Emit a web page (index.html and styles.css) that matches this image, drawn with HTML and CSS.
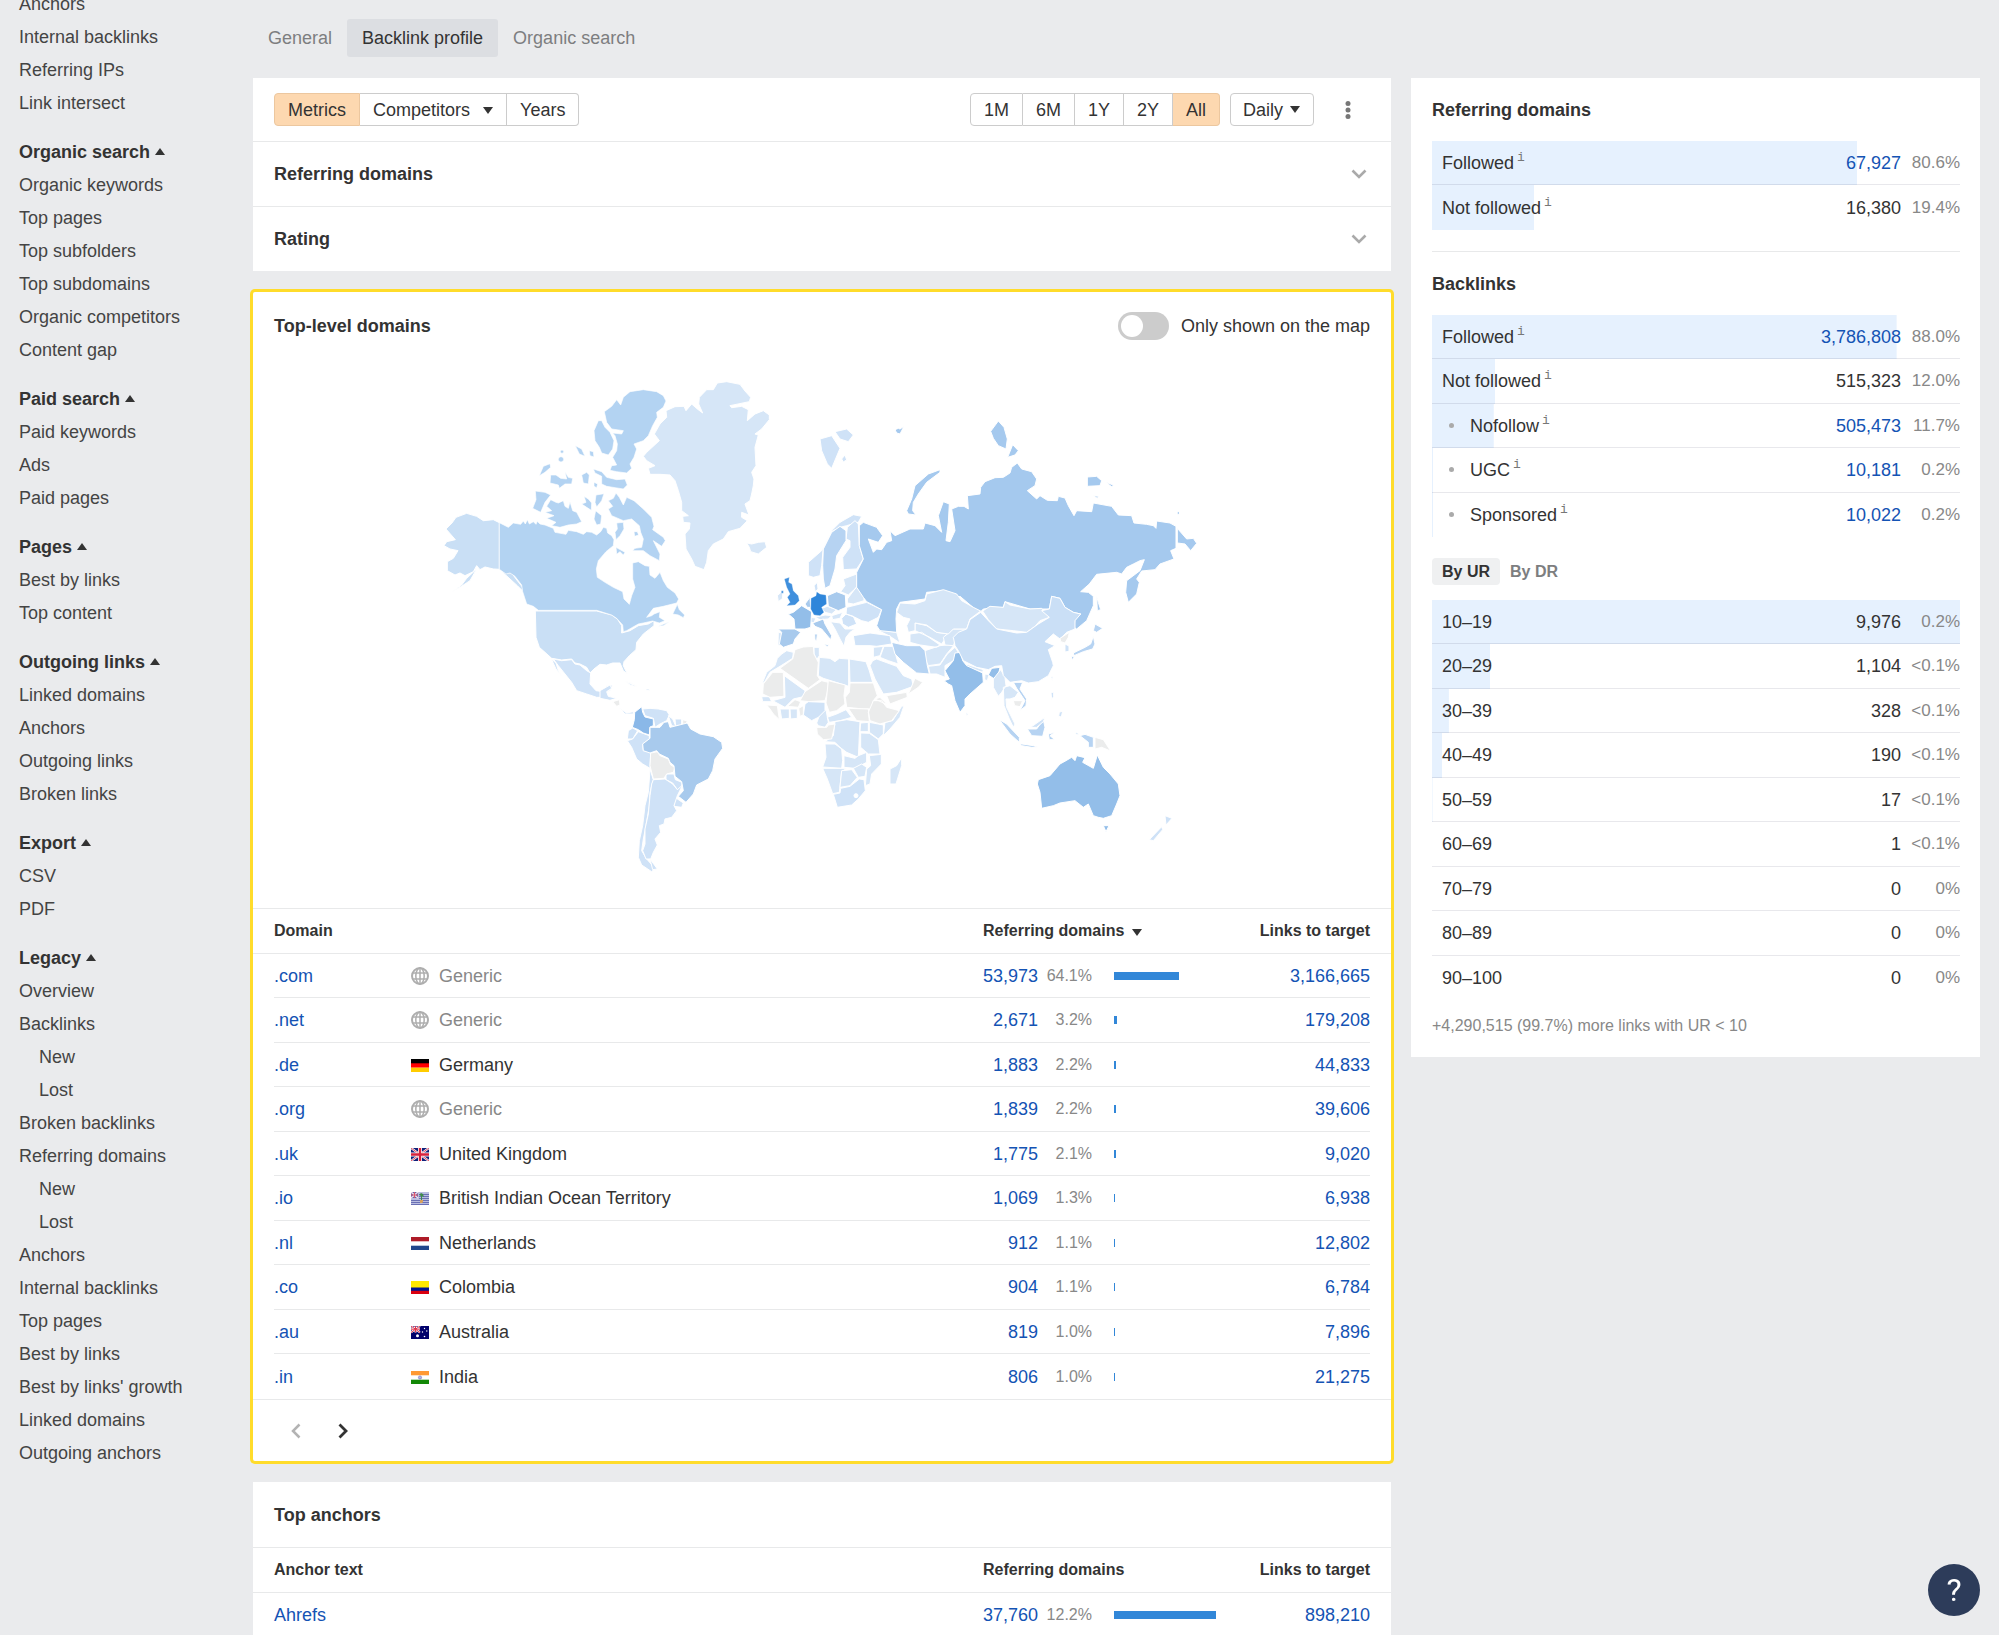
FILE: index.html
```html
<!DOCTYPE html>
<html lang="en">
<head>
  <meta charset="UTF-8" />
  <meta name="viewport" content="width=device-width, initial-scale=1.0"/>
  <title>Backlink profile</title>
  <link rel="stylesheet" href="styles.css">
</head>
<body>
  <!-- shared icons and flags -->
  <svg class="sprite" aria-hidden="true">
    <symbol id="globe" viewBox="0 0 18 18">
      <g fill="none" stroke="#aeaeae" stroke-width="1.500">
        <circle cx="9" cy="9" r="8" stroke-width="2"/>
        <ellipse cx="9" cy="9" rx="4.200" ry="8"/>
        <path d="M9 1v16M1.500 6h15M1.500 12h15"/>
      </g>
    </symbol>
    <symbol id="jack" viewBox="0 0 18 13">
      <path fill="#10207a" d="M0 0h18v13H0z"/>
      <path stroke="#fff" stroke-width="2.200" d="M0 0l18 13M18 0L0 13"/>
      <path stroke="#d8213b" stroke-width=".8" d="M0 0l18 13M18 0L0 13"/>
      <path stroke="#fff" stroke-width="4" d="M9 0v13M0 6.500h18"/>
      <path stroke="#d8213b" stroke-width="2.400" d="M9 0v13M0 6.500h18"/>
    </symbol>
    <symbol id="de" viewBox="0 0 18 13"><path d="M0 0h18v5H0z"/><path fill="#f00" d="M0 4.300h18v4.400H0z"/><path fill="#fc0" d="M0 8.700h18V13H0z"/></symbol>
    <symbol id="nl" viewBox="0 0 18 13"><path fill="#fff" d="M0 0h18v13H0z"/><path fill="#ae1c28" d="M0 0h18v4.300H0z"/><path fill="#21468b" d="M0 8.700h18V13H0z"/></symbol>
    <symbol id="co" viewBox="0 0 18 13"><path fill="#ffe800" d="M0 0h18v7H0z"/><path fill="#00148e" d="M0 6.500h18v4H0z"/><path fill="#da0010" d="M0 9.800h18V13H0z"/></symbol>
    <symbol id="in" viewBox="0 0 18 13"><path fill="#fff" d="M0 0h18v13H0z"/><path fill="#f93" d="M0 0h18v4.300H0z"/><path fill="#128807" d="M0 8.700h18V13H0z"/><circle cx="9" cy="6.500" r="1.600" fill="#b5b5e0" stroke="#6c6cc0" stroke-width=".6"/></symbol>
    <symbol id="au" viewBox="0 0 18 13">
      <path fill="#00006b" d="M0 0h18v13H0z"/>
      <path stroke="#fff" stroke-width="2" d="M0 0l9 6.500M9 0L0 6.500M4.500 0v6.500M0 3.200h9"/>
      <path stroke="#e0344a" d="M0 0l9 6.500M9 0L0 6.500M4.500 0v6.500M0 3.200h9"/>
      <g fill="#fff"><circle cx="6.500" cy="9.800" r="1.500"/><circle cx="13.500" cy="2.500" r=".7"/><circle cx="11.500" cy="6" r=".7"/><circle cx="15.800" cy="5" r=".7"/><circle cx="13.500" cy="10.500" r=".8"/></g>
    </symbol>
    <symbol id="io" viewBox="0 0 18 13">
      <path fill="#b9bde0" d="M0 0h18v13H0z"/>
      <path stroke="#6a70b4" d="M0 8.500h18M0 10.500h18M0 12.500h18M8 2.500h10M8 4.500h10M8 6.500h10"/>
      <path fill="#5c62ae" d="M0 0h7v6H0z"/>
      <path stroke="#f3dfe8" stroke-width="1.500" d="M0 0l7 6M7 0L0 6"/>
      <path stroke="#d9566c" d="M3.500 0v6M0 3h7"/>
      <path fill="#3f8a4c" d="M8 3l2-2 2 1 1 3-2-1v4h-1V4z"/>
      <path fill="#d9a15c" d="M9 8h3v2l-1 1H9z"/>
    </symbol>
    <symbol id="chevron" viewBox="0 0 16 10"><path d="M1.500 1.500L8 8l6.500-6.500" fill="none" stroke="#aaa" stroke-width="2.600"/></symbol>
  </svg>

  <div class="page">
    <nav class="sidebar">
      <ul>
        <li><a href="#">Anchors</a></li>
        <li><a href="#">Internal backlinks</a></li>
        <li><a href="#">Referring IPs</a></li>
        <li><a href="#">Link intersect</a></li>
      </ul>
      <h3>Organic search</h3>
      <ul>
        <li><a href="#">Organic keywords</a></li>
        <li><a href="#">Top pages</a></li>
        <li><a href="#">Top subfolders</a></li>
        <li><a href="#">Top subdomains</a></li>
        <li><a href="#">Organic competitors</a></li>
        <li><a href="#">Content gap</a></li>
      </ul>
      <h3>Paid search</h3>
      <ul>
        <li><a href="#">Paid keywords</a></li>
        <li><a href="#">Ads</a></li>
        <li><a href="#">Paid pages</a></li>
      </ul>
      <h3>Pages</h3>
      <ul>
        <li><a href="#">Best by links</a></li>
        <li><a href="#">Top content</a></li>
      </ul>
      <h3>Outgoing links</h3>
      <ul>
        <li><a href="#">Linked domains</a></li>
        <li><a href="#">Anchors</a></li>
        <li><a href="#">Outgoing links</a></li>
        <li><a href="#">Broken links</a></li>
      </ul>
      <h3>Export</h3>
      <ul>
        <li><a href="#">CSV</a></li>
        <li><a href="#">PDF</a></li>
      </ul>
      <h3>Legacy</h3>
      <ul>
        <li><a href="#">Overview</a></li>
        <li><a href="#">Backlinks</a></li>
        <li class="nested"><a href="#">New</a></li>
        <li class="nested"><a href="#">Lost</a></li>
        <li><a href="#">Broken backlinks</a></li>
        <li><a href="#">Referring domains</a></li>
        <li class="nested"><a href="#">New</a></li>
        <li class="nested"><a href="#">Lost</a></li>
        <li><a href="#">Anchors</a></li>
        <li><a href="#">Internal backlinks</a></li>
        <li><a href="#">Top pages</a></li>
        <li><a href="#">Best by links</a></li>
        <li><a href="#">Best by links' growth</a></li>
        <li><a href="#">Linked domains</a></li>
        <li><a href="#">Outgoing anchors</a></li>
      </ul>
    </nav>

    <div class="content">
      <div class="tabs">
        <button class="tab">General</button>
        <button class="tab active">Backlink profile</button>
        <button class="tab">Organic search</button>
      </div>

      <div class="columns">
        <main>
          <section class="card">
            <div class="toolbar">
              <div class="btn-group">
                <button class="btn active">Metrics</button>
                <button class="btn" aria-haspopup="true">Competitors <span class="caret wide"></span></button>
                <button class="btn">Years</button>
              </div>
              <div class="toolbar-right">
                <div class="btn-group range">
                  <button class="btn">1M</button>
                  <button class="btn">6M</button>
                  <button class="btn">1Y</button>
                  <button class="btn">2Y</button>
                  <button class="btn active">All</button>
                </div>
                <div class="select">
                  <select aria-label="Interval"><option>Daily</option></select>
                  <span class="caret"></span>
                </div>
                <button class="more" aria-label="More">
                  <svg width="6" height="18" viewBox="0 0 6 18" fill="#777"><circle cx="3" cy="2.500" r="2.500"/><circle cx="3" cy="9" r="2.500"/><circle cx="3" cy="15.500" r="2.500"/></svg>
                </button>
              </div>
            </div>
            <button class="fold">Referring domains <svg width="16" height="10"><use href="#chevron"/></svg></button>
            <button class="fold">Rating <svg width="16" height="10"><use href="#chevron"/></svg></button>
          </section>

          <section class="card highlighted">
            <div class="card-head">
              <h2>Top-level domains</h2>
              <label class="switch"><input type="checkbox"> Only shown on the map</label>
            </div>

            <svg class="map" viewBox="0 0 1138 549" role="img" aria-label="World map">
              <!-- North America, Greenland -->
              <g transform="translate(177 10) scale(.33333)">
                <g class="c-us">
                  <path d="M48 480L66 462 78 445 110 433 140 442 160 455 190 452 208 461V601L190 600 165 594 150 602 140 590 130 608 105 620 90 612 75 618 52 605V578L70 568 84 545 60 540 42 530 50 518 76 512Z"/>
                  <path d="M208 601L222 610 245 612 262 635 278 655 280 668 262 650 240 630Z"/>
                  <path d="M140 600L120 635 90 655 66 668 95 648 110 628Z"/>
                  <path d="M316 726H500L545 738 562 750 575 770V792L600 785 625 770 655 765 672 755V770L640 795 620 820 618 842 598 860 582 878 580 890 592 915 580 905 570 882 548 882 530 888 510 886 492 900 480 912 470 895 450 885 435 882 425 870 395 873 365 868 345 850 328 835 318 805Z"/>
                </g>
                <g class="c-canada">
                  <path d="M208 461L235 475 250 462 272 466 280 456 286 465 292 452 298 465 310 458 318 466 322 457 330 465 345 468 370 478 375 490 408 496 415 484 440 488 460 496 470 488 485 490 500 498 512 488 520 475 530 478 533 492 545 500 552 512 550 530 528 548 505 575 499 600 502 625 525 640 550 655 578 668 582 690 598 706 605 680 615 655 608 630V582L625 578 645 590 658 592 660 618 675 628 690 610 700 635 712 655 735 672 746 690 740 702 700 712 670 718 650 745 665 740 672 735 690 728 688 745 705 755 688 762 668 756 640 762 625 765 590 785 580 788 578 768 560 748 545 738 500 724H325L310 712 290 705 278 668 275 648 255 622 240 612 228 615 208 601Z"/>
                  <path d="M728 735L742 706 748 722 764 738 760 746 745 738ZM685 772L718 758 700 770Z"/>
                  <path d="M523 128L545 112 560 92 572 108 580 85 600 68 640 62 680 68 700 80 708 96 700 115 680 130 682 145 668 170 655 200 640 215 612 225 620 240 612 265 600 285 605 298 590 312 560 308 540 304 545 290 560 288 548 265 560 245 562 225 555 200 548 192 575 195 580 185 545 180 530 160Z"/>
                  <path d="M505 155H515L525 175 540 190 552 215 548 240 535 258 515 252 508 235 495 215 492 185Z"/>
                  <path d="M490 300L515 308 530 325 560 332 585 330 592 348 580 360 555 356 530 352 515 345V322L495 312Z"/>
                  <path d="M328 320L340 292 360 284 362 295 345 310ZM362 318L378 318 392 328 410 330 405 308 415 325 428 328 425 345 405 345 388 358 385 348 360 342ZM436 230L455 240 465 262 448 255ZM478 245L490 248 492 264 480 260ZM455 318L470 310 478 318 475 345 460 342ZM492 340L503 345 500 356 492 352Z"/>
                  <circle cx="393" cy="271" r="8"/><circle cx="396" cy="248" r="5"/>
                  <path d="M316 366L345 370 362 378 345 400 332 430 308 418 318 392Z"/>
                  <path d="M362 392L378 400 385 402 400 395 405 412 415 418 420 398 428 425 440 430 455 458 440 465 415 468 390 475 365 470 378 460 350 448 372 440 345 430 365 425 350 412Z"/>
                  <path d="M462 382L475 390 485 402 484 424 470 415 455 405 468 400ZM498 378L522 374 515 395 500 414 495 400ZM497 425L515 440 512 465 500 468 492 450Z"/>
                  <path d="M535 395L550 388 558 372 568 385 580 408 590 385 612 395 640 420 665 445 672 472 668 482 700 505 706 515 695 532 670 515 690 555 688 575 660 560 640 545 608 545 615 538 635 535 640 510 632 490 628 470 605 450 580 455 545 440 535 420 548 412Z"/>
                  <path d="M560 462L580 460 582 480 570 500 558 512 555 490 562 480ZM558 535L585 550 580 558 570 548 560 556ZM612 488h10l4 10-12 4Z"/>
                </g>
                <g class="c-pale">
                  <path d="M640 262L650 250 688 215 673 195 690 165 710 145 708 125 735 113 762 112 768 125 785 105 802 120 818 132 806 105 808 85 830 62 850 62 862 42 890 38 930 46 945 66 962 85 958 98 900 110 905 116 935 112 955 122 952 155 975 135 1000 125 1018 138V152L995 180 975 195 985 198 975 235 978 290 965 310 972 330 970 350 965 375 960 395 945 405 957 438 935 430V445L952 455 930 478 895 488 880 510 850 525 835 545 830 580 822 602 795 592 785 570 768 540 765 495 778 480 780 462 760 460 758 442 775 440 755 425V400L745 365 735 335 720 318 690 316 660 316 655 298 675 290 650 275Z"/>
                  <path d="M950 522L965 525 985 520 1005 518 1010 535 985 555 962 548 958 535Z"/>
                </g>
                <g class="c-light">
                  <path d="M370 870L395 875 425 872 435 885 450 888 470 905 482 912 480 945 498 965 520 968 530 950 548 948 540 965 525 970 518 985 500 985 470 975 440 965 425 940 405 915 385 890Z"/>
                  <path d="M364 870L378 882 385 905 395 922 378 900ZM587 937L605 942 622 954 600 948ZM648 960l12 2-4 3Z"/>
                </g>
              </g>

              <!-- Central and South America -->
              <g transform="translate(347 300) scale(.33333)">
                <g class="c-light">
                  <path d="M0 95L30 78 35 88 20 98 25 112 50 118 30 124 0 118ZM58 148L80 162 100 158V165L75 165ZM78 67L110 80 95 76ZM138 90h10v4h-10Z"/>
                  <path d="M128 150L150 148 175 150 200 155 208 168 200 185 180 195 165 205 160 178 135 170Z"/>
                  <path d="M205 170L218 180 228 203 215 200ZM225 180h20v20h-18Z"/>
                  <path d="M85 215L98 207 113 215 98 240 82 240Z"/>
                  <path d="M82 245L98 240 115 218 148 230V240L128 255 130 275 152 280 150 328 128 315 110 300 95 265Z"/>
                  <path d="M198 345H222L226 362 246 370 245 388 232 392 218 372 198 362Z"/>
                  <path d="M225 415L250 432 245 445 222 442Z"/>
                  <path d="M150 330L160 362 150 400 148 440 138 500 130 540 125 575 140 600 165 628 155 638 125 618 115 595 118 545 128 500 135 440 145 400 148 360Z"/>
                  <path d="M160 362L195 360 218 375 232 392 248 378 232 410 222 440 230 455 215 475 195 480 192 495 178 500 182 520 165 540 172 558 160 580 152 600 138 600 128 575 135 555V510L145 465 150 410 155 375Z"/>
                  <path d="M150 600L172 630 158 632Z"/>
                </g>
                <g class="c-none">
                  <path d="M38 128L58 122 60 138 50 142ZM248 182l14 4-6 12-8-2Z"/>
                  <path d="M152 282L172 278 180 290 205 300 212 318 225 325 220 340 200 345 192 358 160 360 150 320Z"/>
                </g>
                <path class="c-colombia" d="M125 143L104 160 103 182 97 205 115 212 130 222 148 228 150 204 160 200V180L135 174 128 160Z"/>
                <path class="c-brazil" d="M150 205L180 205 192 190 205 188 210 205 262 192 272 210 300 225 340 233 365 250 368 268 345 300 338 335 325 360 290 378 280 405 258 430 235 412 250 395 245 368 225 352 222 320 210 310 205 298 178 285 170 275 150 282 130 275 128 255 150 238Z"/>
              </g>

              <!-- Europe, Africa, Middle East, India -->
              <g transform="translate(487 40) scale(.33333)">
                <g class="c-pale">
                  <path d="M125 765L140 755 160 760 158 778 120 802 90 820 72 852 68 850 80 820 105 800 112 778Z"/>
                  <path d="M222 745H238V770L230 782 222 765ZM238 775L270 778 285 788 298 778 326 780V862L250 838 235 830Z"/>
                  <path d="M328 780L378 788 388 815 398 850 330 850Z"/>
                  <path d="M133 830L195 875V892L160 900 135 925 98 905 135 895ZM65 893L88 893 95 908 68 908Z"/>
                  <path d="M430 1010L435 970 458 965 485 922 492 920 480 955 450 990Z"/>
                  <path d="M120 930H148V958L125 960ZM150 930h22v28l-20 2Z"/>
                  <path d="M230 972L240 945 258 932 265 970 255 985 235 980ZM262 955L290 945 318 932 335 955 300 965 268 970Z"/>
                  <path d="M285 968L320 962 360 968 358 1010 355 1075 320 1060 300 1045 285 1030 255 1028 280 1010Z"/>
                  <path d="M362 972L385 970V998H360ZM388 970L430 978V1005L415 1020 388 1000ZM362 1002L388 1003 415 1022 420 1065 385 1065 362 1045Z"/>
                  <path d="M255 1035L285 1035 305 1050 308 1085 305 1108 248 1104 258 1075ZM312 1070L345 1078 355 1070 380 1060V1090L345 1108 312 1105Z"/>
                  <path d="M388 1070L424 1066V1095L395 1125 390 1155 376 1160 380 1110 392 1100ZM248 1108L320 1108 305 1118 298 1180 278 1184 262 1140Z"/>
                  <path d="M305 1115L335 1112 352 1135 330 1160 300 1165ZM340 1108L365 1095 380 1105 375 1132 355 1135Z"/>
                  <path d="M450 1110L470 1100 485 1076V1100L468 1155 450 1155Z"/>
                  <path d="M112 590L128 575V598L115 608ZM115 700L125 702V740L114 738Z"/>
                  <path d="M245 628L262 622 290 632 275 645 255 640ZM225 655L255 648 275 650 265 660 240 662ZM210 655l18 2-6 14-14-2Z"/>
                  <path d="M275 650L308 640 300 658 278 662ZM322 600L350 563 372 590V605L340 615 322 612ZM310 540L350 525V565L325 588 302 578 315 560Z"/>
                  <path d="M272 668L300 672 315 690 345 690 330 700 318 715 312 742 300 720 285 690ZM410 692L470 700 480 732 450 712Z"/>
                  <path d="M400 745L430 742 420 770 400 775ZM432 742L460 742 475 795 445 785 420 775ZM398 785L410 780 470 802 490 830 515 840 520 862 470 880 430 885 405 840 390 800Z"/>
                  <path d="M510 705L545 700 600 738 590 745 540 738 510 730ZM525 672L560 680 590 700 625 705 605 735 570 715 525 695ZM555 755L600 740 645 735 620 765 600 795 565 800 555 780Z"/>
                  <path d="M570 825L565 802 600 798 622 765 645 745 655 760 640 785 615 800V835L590 825ZM610 715L640 690 680 690 650 715 640 740 615 738Z"/>
                  <path d="M678 795L730 812 728 820 680 805ZM735 825l12 2-5 18-8-3ZM678 938l6 8-5 6Z"/>
                </g>
                <g class="c-none">
                  <path d="M165 752L190 744 220 742 222 765 235 790 232 830 240 842 205 868 120 808 158 780Z"/>
                  <path d="M70 855L98 820 130 820 132 892 90 895 68 885ZM195 878L245 845 265 850 262 880 255 905 205 908 180 905Z"/>
                  <path d="M265 845L316 858 312 890 315 915 290 935 268 940 258 912ZM330 852L400 852 412 890 400 905 395 930 370 930 320 925 316 895 328 880Z"/>
                  <path d="M325 928L385 930 388 968 350 965ZM400 905L425 905 440 925 478 935 455 965 420 975 390 965 385 940ZM405 900L420 895 440 915 430 912Z"/>
                  <path d="M142 922L165 902 182 908 175 925ZM176 928l14-8v28l-10 4ZM80 918L112 920 118 962 100 945 90 930Z"/>
                  <path d="M230 985H260L265 978 285 975 275 1020 250 1022 232 1005ZM440 890L500 880 502 895 450 915ZM505 885L525 838 548 850 535 865Z"/>
                </g>
                <g class="c-light">
                  <path d="M195 915L205 908 255 910V935L235 955 215 965 190 948Z"/>
                  <path d="M280 1186L300 1182 302 1168 330 1162 358 1140 372 1142 376 1175 355 1200 335 1218 292 1225Z"/>
                  <path d="M205 530V490L245 455 270 400 300 370 340 347 365 352 355 370 320 380 300 385 270 400 250 445 245 500 240 530 220 535Z"/>
                  <path d="M322 385L345 365 355 375 358 440 370 480 350 510 310 512 308 475 330 445V425L318 420Z"/>
                  <path d="M305 658L318 645 340 652 350 675 325 685 308 675ZM320 625L380 610 425 632 415 655 385 670 365 665 345 655 318 645Z"/>
                  <path d="M340 710L390 702 450 710 455 735 410 742 390 740 345 740ZM222 560l10-10 2 20-8 8Z"/>
                  <path d="M240 120L275 110 300 148 275 208 262 195 245 155ZM285 98L320 90 340 108 325 128 300 120ZM305 180l10-12 5 15-10 6Z"/>
                </g>
                <circle class="lake" cx="348" cy="1190" r="6"/>
                <path class="c-iran" d="M248 500L250 450 275 400 300 382 318 395V425L290 470 285 510 270 560 255 568 250 540Z"/>
                <path class="c-iran" d="M455 730L500 740 540 740 555 755 562 800 568 825 530 822 490 790 465 765Z"/>
                <path class="c-brazil" d="M115 690L165 690 182 700 165 720 160 735 130 745 118 735 125 700ZM262 590L290 578 316 588 318 625 295 635 265 622ZM195 615l15-20 2 30-10 0ZM218 672L250 660 255 675 275 710 272 722 245 690 225 682ZM252 735l14 2-4 6ZM224 705h8l-2 20-5-2Z"/>
                <path class="c-australia" d="M145 645L160 640 185 620 215 638 212 685 195 690 165 690 162 660Z"/>
                <path class="c-uk" d="M133 540L148 535 146 550 156 555 160 575 175 590 178 605 165 618 140 620 150 610 142 595 150 585 140 565ZM124 575h6v8h-6Z"/>
                <path class="c-germany" d="M213 598L228 590 230 578 240 585 258 588 260 615 245 625 252 640 240 650 222 648 212 630Z"/>
                <path class="c-australia" d="M612 845L628 840 620 825 615 815 640 785 645 762 662 760 668 785 680 800 728 822 730 850 690 885 675 900V920L660 940 645 905 635 860 625 855ZM745 828L755 808 780 805 775 830 760 838Z"/>
                <path class="c-russia" d="M465 92L475 88 480 90 492 82 480 105 470 102ZM500 335L515 300 525 260 565 225 600 212V220L560 250 535 285 520 310 518 335 528 348 505 345Z"/>
              </g>

              <!-- Russia, East Asia, Oceania -->
              <g transform="translate(707 40) scale(.33333)">
                <g class="c-russia">
                  <path d="M-302 380L-290 370-250 385-232 410-245 430-275 420-260 460-250 450-235 452-220 430-205 425-210 395-195 410-150 390-110 390-105 372-75 380-55 400-65 350-50 308-32 315-35 370-42 425-30 428-15 395-25 330-5 322 12 322 25 330 22 290 60 285 62 265 75 248 105 236 130 235 150 222 155 205 172 192 185 210 215 218 230 240 225 260 202 275 230 300 240 290 262 304 292 305 295 292 315 297 325 320 342 350 350 335 395 338 400 312 455 322 475 348 515 350 522 372 560 376 580 380 588 388 590 366 630 372 648 382V448L632 455 642 480 600 495 585 512 545 516 530 540 538 550 530 585 505 610 497 580 500 545 540 515 553 482 540 485 520 495 500 505 485 525 470 520 410 526 388 555 362 578 385 580 400 592V620L380 665 350 690 342 685 345 660 362 645 340 640 315 625 300 598 275 592 268 630 210 630 135 608 130 625 70 630 62 638 45 630 0 592-15 600-50 575-100 580-105 600-180 610-190 630-192 660-190 700-240 695-250 680-235 632-280 608-290 595-310 565V520L-290 480-302 440Z"/>
                  <path d="M92 97L115 66 132 85 142 120 138 150 115 140 100 118ZM158 137L175 155 165 168 143 175ZM382 234L410 232 425 245 420 260 382 262ZM438 250l22 8-4 6ZM400 290l16 2-4 6ZM652 388L680 420 700 418 710 433 692 455 675 435 652 432ZM410 592L415 610 422 632 412 635Z"/>
                  <circle cx="655" cy="342" r="4"/>
                </g>
                <g class="c-pale">
                  <path d="M-190 640L-180 612-135 615-105 605-100 585-50 572-10 585 5 605 40 625 62 636 30 660 20 690-20 690-35 705-70 700-100 678-135 672V695L-155 700-160 680-150 660-170 655Z"/>
                  <path d="M68 636L90 622 130 625 135 608 150 618 210 630 245 628 268 655 240 665 225 682 200 700 160 695 110 690 85 662Z"/>
                  <path d="M100 840L122 812 135 835 138 860 125 880 115 892 100 865ZM130 865L150 860 175 880 165 895 150 900 138 900 140 925 150 945 165 975 160 985 148 960 132 920Z"/>
                </g>
                <path class="c-china" d="M62 640L85 665 110 690 170 702 200 700 235 675 268 655 245 635 268 630 275 592 300 598 315 625 340 640 362 645 345 665V690L320 700 300 720 280 705 255 728 285 740 265 752 278 790 280 800 265 830 235 848 205 852 185 845 150 850 130 830 125 800 105 802 85 812 50 805 10 785-5 755-15 740-20 715-5 700 20 690 30 662Z"/>
                <g class="c-none">
                  <path d="M300 718L328 700 325 715 315 732 302 728ZM160 905h28l-8 18-16-3ZM405 1015L430 1022 452 1056 425 1045 405 1050Z"/>
                </g>
                <g class="c-iran">
                  <path d="M400 712L405 735 398 750 370 758 342 770 340 762 375 745 392 735ZM405 675L428 688 410 700 400 695ZM333 772h10l-5 12Z"/>
                  <path d="M160 850L188 850 180 870 200 900 198 920 180 935 195 905 170 868Z"/>
                  <path d="M118 962L140 975 178 1015V1030L150 1005ZM180 1034L220 1040 235 1045 215 1045 185 1040ZM202 990L230 990 250 962 255 985 248 1012 215 1010ZM265 1005L285 1000 270 1010 284 1022 268 1022ZM345 1000l12 4-6 4ZM360 1010L375 1006 400 1015V1045H385V1030Z"/>
                </g>
                <g class="c-light">
                  <path d="M315 735l12 6v16l-12 2ZM212 985L255 955 250 968 230 985ZM273 880h8v12l-6 10ZM298 940l10-4-4 18-8-2ZM273 835l6-4-2 14Z"/>
                  <path d="M615 1250L636 1258 618 1278ZM605 1283L608 1292 580 1325 568 1322Z"/>
                </g>
                <path class="c-australia" d="M235 1142L270 1130 300 1095 318 1085 335 1075 345 1085 350 1070 375 1076 368 1090 400 1108 412 1068 430 1105 450 1125 475 1155 480 1190 470 1215 455 1250 430 1258 415 1255 400 1250 385 1215 370 1225 345 1205 300 1212 280 1220 245 1228 240 1180 232 1155ZM430 1280H447L438 1298Z"/>
              </g>
            </svg>

            <table class="data bordered">
              <colgroup><col class="gut-l"><col class="w-domain"><col><col class="w-num"><col class="w-pct"><col class="w-bar"><col class="w-links"><col class="gut-r"></colgroup>
              <thead>
                <tr><th>Domain</th><th></th><th colspan="3">Referring domains <span class="caret"></span></th><th class="num">Links to target</th></tr>
              </thead>
              <tbody>
                <tr><td><a href="#">.com</a></td><td class="muted"><svg class="flag globe"><use href="#globe"/></svg>Generic</td><td class="num"><a href="#">53,973</a></td><td class="pct">64.1%</td><td class="bar"><div style="width:65px"></div></td><td class="num"><a href="#">3,166,665</a></td></tr>
                <tr><td><a href="#">.net</a></td><td class="muted"><svg class="flag globe"><use href="#globe"/></svg>Generic</td><td class="num"><a href="#">2,671</a></td><td class="pct">3.2%</td><td class="bar"><div style="width:3px"></div></td><td class="num"><a href="#">179,208</a></td></tr>
                <tr><td><a href="#">.de</a></td><td><svg class="flag"><use href="#de"/></svg>Germany</td><td class="num"><a href="#">1,883</a></td><td class="pct">2.2%</td><td class="bar"><div style="width:2px"></div></td><td class="num"><a href="#">44,833</a></td></tr>
                <tr><td><a href="#">.org</a></td><td class="muted"><svg class="flag globe"><use href="#globe"/></svg>Generic</td><td class="num"><a href="#">1,839</a></td><td class="pct">2.2%</td><td class="bar"><div style="width:2px"></div></td><td class="num"><a href="#">39,606</a></td></tr>
                <tr><td><a href="#">.uk</a></td><td><svg class="flag"><use href="#jack"/></svg>United Kingdom</td><td class="num"><a href="#">1,775</a></td><td class="pct">2.1%</td><td class="bar"><div style="width:2px"></div></td><td class="num"><a href="#">9,020</a></td></tr>
                <tr><td><a href="#">.io</a></td><td><svg class="flag"><use href="#io"/></svg>British Indian Ocean Territory</td><td class="num"><a href="#">1,069</a></td><td class="pct">1.3%</td><td class="bar"><div style="width:1px"></div></td><td class="num"><a href="#">6,938</a></td></tr>
                <tr><td><a href="#">.nl</a></td><td><svg class="flag"><use href="#nl"/></svg>Netherlands</td><td class="num"><a href="#">912</a></td><td class="pct">1.1%</td><td class="bar"><div style="width:1px"></div></td><td class="num"><a href="#">12,802</a></td></tr>
                <tr><td><a href="#">.co</a></td><td><svg class="flag"><use href="#co"/></svg>Colombia</td><td class="num"><a href="#">904</a></td><td class="pct">1.1%</td><td class="bar"><div style="width:1px"></div></td><td class="num"><a href="#">6,784</a></td></tr>
                <tr><td><a href="#">.au</a></td><td><svg class="flag"><use href="#au"/></svg>Australia</td><td class="num"><a href="#">819</a></td><td class="pct">1.0%</td><td class="bar"><div style="width:1px"></div></td><td class="num"><a href="#">7,896</a></td></tr>
                <tr><td><a href="#">.in</a></td><td><svg class="flag"><use href="#in"/></svg>India</td><td class="num"><a href="#">806</a></td><td class="pct">1.0%</td><td class="bar"><div style="width:1px"></div></td><td class="num"><a href="#">21,275</a></td></tr>
              </tbody>
            </table>

            <div class="pager">
              <button aria-label="Previous" disabled><svg width="10" height="16" viewBox="0 0 10 16"><path d="M8.500 1.500L2 8l6.500 6.500" fill="none" stroke="#b3b3b3" stroke-width="2.500"/></svg></button>
              <button aria-label="Next"><svg width="10" height="16" viewBox="0 0 10 16"><path d="M1.500 1.500L8 8l-6.500 6.500" fill="none" stroke="#333" stroke-width="2.800"/></svg></button>
            </div>
          </section>

          <section class="card">
            <div class="card-head small"><h2>Top anchors</h2></div>
            <table class="data bordered">
              <colgroup><col class="gut-l"><col><col class="w-num"><col class="w-pct"><col class="w-bar"><col class="w-links"><col class="gut-r"></colgroup>
              <thead>
                <tr><th>Anchor text</th><th colspan="3">Referring domains</th><th class="num">Links to target</th></tr>
              </thead>
              <tbody>
                <tr><td><a href="#">Ahrefs</a></td><td class="num"><a href="#">37,760</a></td><td class="pct">12.2%</td><td class="bar"><div style="width:102px"></div></td><td class="num"><a href="#">898,210</a></td></tr>
              </tbody>
            </table>
          </section>
        </main>

        <aside class="card">
          <h2>Referring domains</h2>
          <table class="stats">
            <tr style="--share:80.5%"><td>Followed<sup>i</sup></td><td class="num"><a href="#">67,927</a></td><td class="pct">80.6%</td></tr>
            <tr style="--share:19.4%"><td>Not followed<sup>i</sup></td><td class="num">16,380</td><td class="pct">19.4%</td></tr>
          </table>
          <h2 class="divided">Backlinks</h2>
          <table class="stats">
            <tr style="--share:88%"><td>Followed<sup>i</sup></td><td class="num"><a href="#">3,786,808</a></td><td class="pct">88.0%</td></tr>
            <tr style="--share:12%"><td>Not followed<sup>i</sup></td><td class="num">515,323</td><td class="pct">12.0%</td></tr>
            <tr class="sub" style="--share:11.7%"><td>Nofollow<sup>i</sup></td><td class="num"><a href="#">505,473</a></td><td class="pct">11.7%</td></tr>
            <tr class="sub" style="--share:0.2%"><td>UGC<sup>i</sup></td><td class="num"><a href="#">10,181</a></td><td class="pct">0.2%</td></tr>
            <tr class="sub" style="--share:0.2%"><td>Sponsored<sup>i</sup></td><td class="num"><a href="#">10,022</a></td><td class="pct">0.2%</td></tr>
          </table>
          <div class="pills">
            <button class="pill active">By UR</button>
            <button class="pill">By DR</button>
          </div>
          <table class="stats">
            <tr style="--share:100%"><td>10–19</td><td class="num">9,976</td><td class="pct">0.2%</td></tr>
            <tr style="--share:11%"><td>20–29</td><td class="num">1,104</td><td class="pct">&lt;0.1%</td></tr>
            <tr style="--share:3.2%"><td>30–39</td><td class="num">328</td><td class="pct">&lt;0.1%</td></tr>
            <tr style="--share:1.9%"><td>40–49</td><td class="num">190</td><td class="pct">&lt;0.1%</td></tr>
            <tr style="--share:0.1%"><td>50–59</td><td class="num">17</td><td class="pct">&lt;0.1%</td></tr>
            <tr style="--share:0%"><td>60–69</td><td class="num">1</td><td class="pct">&lt;0.1%</td></tr>
            <tr style="--share:0%"><td>70–79</td><td class="num">0</td><td class="pct">0%</td></tr>
            <tr style="--share:0%"><td>80–89</td><td class="num">0</td><td class="pct">0%</td></tr>
            <tr style="--share:0%"><td>90–100</td><td class="num">0</td><td class="pct">0%</td></tr>
          </table>
          <p class="note">+4,290,515 (99.7%) more links with UR &lt; 10</p>
        </aside>
      </div>
    </div>
  </div>

  <button class="help" aria-label="Help">?</button>
</body>
</html>
```

FILE: styles.css
```css
* {
  box-sizing: border-box;
}
body {
  margin: 0;
  height: 100vh;
  overflow: hidden;
  background-color: #eaebed;
  color: #333;
  font-family: "Liberation Sans", Arial, sans-serif;
  font-size: 18px;
  line-height: 24px;
}
a {
  color: #1453b4;
  text-decoration: none;
}
h2, h3, p {
  margin: 0;
}
h2 {
  font-size: 18px;
  line-height: 24px;
}
button, select {
  font: inherit;
  color: inherit;
  background: none;
  border: none;
  padding: 0;
  cursor: pointer;
}
.sprite {
  display: none;
}
.page {
  display: flex;
}

/* sidebar */
.sidebar {
  flex: 0 0 253px;
  margin-top: -12px;
  padding-left: 19px;
  line-height: 33px;
}
.sidebar ul {
  list-style: none;
  margin: 0 0 16px;
  padding: 0;
}
.sidebar a {
  color: #444;
}
.sidebar .nested {
  padding-left: 20px;
}
.sidebar h3 {
  font-size: 18px;
}
.sidebar h3::after {
  content: "";
  display: inline-block;
  margin-left: 5px;
  vertical-align: 3px;
  border: 5px solid transparent;
  border-top: none;
  border-bottom: 7px solid #333;
}

/* content */
.content {
  flex: 1;
  min-width: 0;
  padding: 19px 19px 0 0;
}
.tabs {
  display: flex;
  margin-bottom: 21px;
}
.tab {
  height: 38px;
  padding: 0 15px;
  border-radius: 3px;
  color: #7d7e80;
}
.tab.active {
  background-color: #dcdee2;
  color: #333;
}
.columns {
  display: grid;
  grid-template-columns: 2fr 1fr;
  gap: 20px;
  align-items: start;
}
main {
  display: flex;
  flex-direction: column;
  gap: 21px;
  min-width: 0;
}
.card {
  background-color: #fff;
}
.highlighted {
  border-radius: 2px;
  box-shadow: 0 0 0 3px #ffdc2b;
}

/* toolbar */
.toolbar {
  display: flex;
  justify-content: space-between;
  align-items: center;
  height: 63px;
  padding: 0 20px 0 21px;
}
.toolbar-right {
  display: flex;
  align-items: center;
  gap: 10px;
}
.btn-group {
  display: flex;
}
.btn {
  height: 33px;
  padding: 0 13px;
  border: 1px solid #ccc;
  border-left-width: 0;
}
.btn:first-child {
  border-left-width: 1px;
  border-radius: 4px 0 0 4px;
}
.btn:last-child {
  border-radius: 0 4px 4px 0;
}
.btn.active {
  background-color: #fdd8b0;
  border-color: #ecc79f;
}
.caret {
  display: inline-block;
  border: 5px solid transparent;
  border-bottom: none;
  border-top: 7px solid #333;
  vertical-align: 2px;
}
.caret.wide {
  margin-left: 8px;
}
.select {
  position: relative;
}
.select select {
  appearance: none;
  height: 33px;
  width: 84px;
  padding: 0 12px;
  border: 1px solid #ccc;
  border-radius: 4px;
}
.select .caret {
  position: absolute;
  right: 14px;
  top: 13px;
  pointer-events: none;
}
.more {
  width: 47px;
  height: 33px;
  line-height: 1;
}
.more svg {
  display: block;
  margin: 0 auto;
}
.fold {
  display: flex;
  justify-content: space-between;
  align-items: center;
  width: 100%;
  height: 65px;
  padding: 0 24px 0 21px;
  border-top: 1px solid #e8e9ea;
  font-weight: bold;
}

/* map card */
.card-head {
  display: flex;
  justify-content: space-between;
  align-items: center;
  height: 67px;
  padding: 0 21px;
}
.card-head.small {
  height: 65px;
}
.switch {
  display: flex;
  align-items: center;
  gap: 12px;
}
.switch input {
  appearance: none;
  width: 51px;
  height: 28px;
  margin: 0;
  padding: 3px;
  border-radius: 14px;
  background-color: #ccc;
}
.switch input::before {
  content: "";
  display: block;
  width: 22px;
  height: 22px;
  border-radius: 50%;
  background-color: #fff;
}
.switch input:checked::before {
  margin-left: auto;
}
.map {
  display: block;
  width: 100%;
  stroke: #fff;
  stroke-width: 3;
  stroke-linejoin: round;
}
.c-us { fill: #c9dff5; }
.c-canada { fill: #b3d3f2; stroke-width: 2; }
.c-pale { fill: #d6e6f7; }
.c-light { fill: #cfe2f7; }
.c-none { fill: #ebecec; }
.c-china { fill: #cadff6; }
.c-iran { fill: #b6d3f2; }
.c-brazil { fill: #a8caed; }
.c-russia { fill: #a5c9ee; }
.c-australia { fill: #93bee9; }
.c-colombia { fill: #8ab8e8; }
.c-uk { fill: #3f8fdd; stroke-width: 1; }
.c-germany { fill: #2f86da; stroke-width: 1; }
.lake { fill: #fff; }

/* tables */
table {
  width: 100%;
  table-layout: fixed;
  border-collapse: separate;
  border-spacing: 0;
}
th, td {
  padding: 0;
  text-align: left;
  white-space: nowrap;
}
.num, .pct {
  text-align: right;
}
.pct {
  color: #888;
  font-size: 16px;
}
.muted {
  color: #888;
}
.bordered {
  border-top: 1px solid #e8e9ea;
}
.data tr::before,
.data tr::after {
  content: "";
  display: table-cell;
}
.data th {
  height: 45px;
  font-size: 16px;
}
.data thead tr > *,
.data thead tr::before,
.data thead tr::after {
  border-bottom: 1px solid #e8e9ea;
}
.data td {
  height: 44px;
  border-bottom: 1px solid #e8e9ea;
}
.data tr:nth-child(even) td {
  height: 45px;
}
.data tr:last-child td {
  border-bottom: none;
}
.data .caret {
  margin-left: 3px;
  vertical-align: 0;
}
.gut-l { width: 21px; }
.gut-r { width: 21px; }
.w-domain { width: 137px; }
.w-num { width: 55px; }
.w-pct { width: 54px; }
.w-bar { width: 147px; }
.w-links { width: 131px; }
.bar {
  padding-left: 22px;
}
.bar div {
  height: 8px;
  background-color: #3287d8;
}
.flag {
  width: 18px;
  height: 13px;
  margin-right: 10px;
  vertical-align: -1px;
}
.flag.globe {
  height: 18px;
  vertical-align: -3px;
}
.pager {
  display: flex;
  align-items: center;
  gap: 15px;
  height: 62px;
  padding-left: 27px;
  border-top: 1px solid #e8e9ea;
}
.pager button {
  width: 32px;
  height: 32px;
}
.pager svg {
  display: block;
  margin: 0 auto;
}

/* right column */
aside {
  padding: 20px 20px 19px 21px;
}
aside h2 {
  margin-bottom: 19px;
}
aside h2.divided {
  margin-top: 21px;
  padding-top: 20px;
  border-top: 1px solid #e8e9ea;
}
.stats tr {
  background: linear-gradient(#e6f1fe, #e6f1fe) no-repeat 0 0 / var(--share) 100%;
}
.stats td {
  height: 44px;
  border-bottom: 1px solid rgba(0, 0, 40, 0.09);
}
.stats tr:nth-child(even) td {
  height: 45px;
}
.stats tr:last-child td {
  border-bottom: none;
}
.stats td:first-child {
  padding-left: 10px;
}
.stats .pct {
  width: 59px;
  font-size: 17px;
}
.stats .num {
  width: 120px;
}
.stats sup {
  margin-left: 3px;
  color: #777;
  font-family: "Liberation Mono", monospace;
  font-size: 13px;
  line-height: 0;
  vertical-align: 8px;
}
.stats .sub td:first-child::before {
  content: "";
  display: inline-block;
  width: 5px;
  height: 5px;
  margin: 0 16px 0 7px;
  border-radius: 50%;
  background-color: #aaa;
  vertical-align: 4px;
}
.pills {
  display: flex;
  margin: 21px 0 15px;
}
.pill {
  height: 27px;
  padding: 0 10px;
  border-radius: 4px;
  color: #7d7e80;
  font-size: 16px;
  font-weight: bold;
}
.pill.active {
  background-color: #eff0f1;
  color: #333;
}
.note {
  margin-top: 14px;
  color: #888;
  font-size: 16px;
}

.help {
  position: fixed;
  right: 19px;
  bottom: 19px;
  width: 52px;
  height: 52px;
  border-radius: 50%;
  background-color: #2d3c5a;
  color: #fff;
  font-family: Roboto, sans-serif;
  font-size: 32px;
}
```
